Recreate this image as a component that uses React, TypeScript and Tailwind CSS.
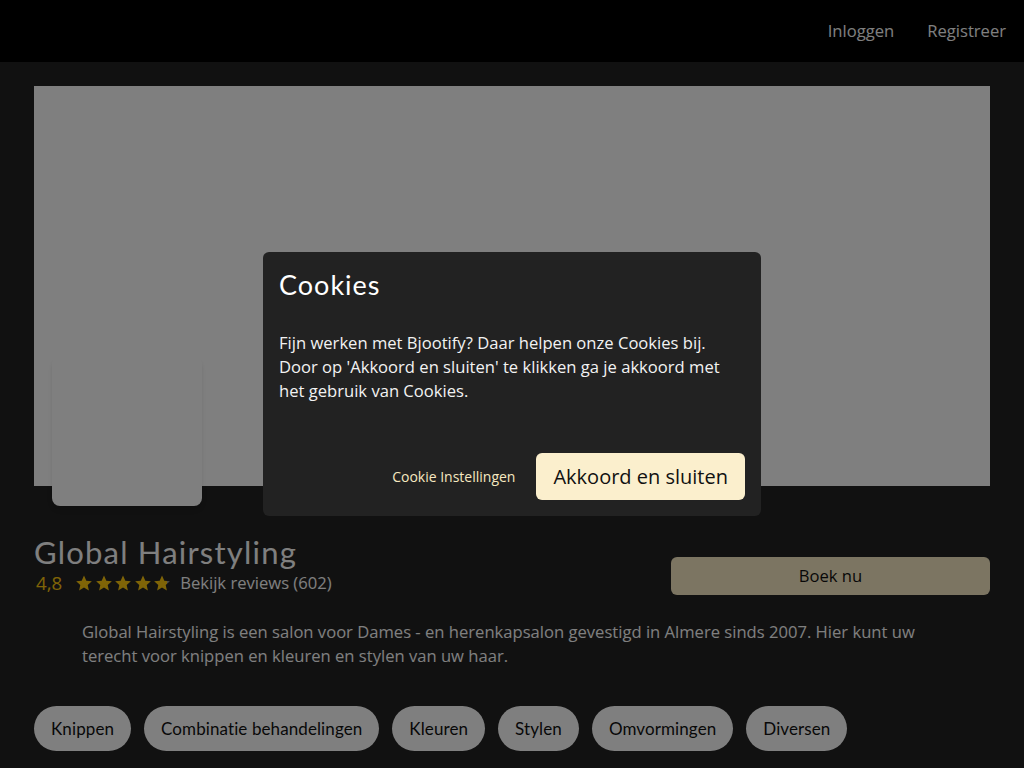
import React from "react";

const CATEGORIES = [
  "Knippen",
  "Combinatie behandelingen",
  "Kleuren",
  "Stylen",
  "Omvormingen",
  "Diversen",
];

function Star({ fill = 1 }: { fill?: number }) {
  const id = `star-${Math.round(fill * 100)}`;
  return (
    <svg viewBox="1 1.2 22 21" className="w-4 h-4">
      <defs>
        <linearGradient id={id}>
          <stop offset={`${fill * 100}%`} stopColor="#ffc90e" />
          <stop offset={`${fill * 100}%`} stopColor="#9a9a9a" />
        </linearGradient>
      </defs>
      <path
        d="M12 1.5l3.2 7 7.6.8-5.7 5.1 1.6 7.5L12 18l-6.7 3.9 1.6-7.5L1.2 9.3l7.6-.8z"
        fill={`url(#${id})`}
      />
    </svg>
  );
}

export default function App() {
  return (
    <div className="relative min-h-screen bg-[#222] font-['Open_Sans',sans-serif] text-[16.6px] overflow-hidden">
      {/* HEADER */}
      <header className="h-[62px] bg-black flex items-center justify-end gap-[33px] pr-[18px] text-white">
        <a href="#">Inloggen</a>
        <a href="#">Registreer</a>
      </header>

      <main className="px-[34px] pt-[24px]">
        {/* HERO IMAGE + AVATAR */}
        <div className="relative h-[400px] bg-white">
          <div className="absolute left-[18px] -bottom-[20px] w-[150px] h-[150px] rounded-lg bg-white shadow-md" />
        </div>

        {/* TITLE + BOOK */}
        <div className="flex justify-between items-end mt-[48px]">
          <div>
            <h1 className="font-['Lato',sans-serif] text-[31px] leading-[36px] tracking-[1.2px] text-white">
              Global Hairstyling
            </h1>
            <div className="flex items-center -mt-[1px]">
              <span className="text-[18.7px] text-[#ffc90e] ml-[2px]">4,8</span>
              <div className="flex gap-[3.5px] ml-[14px]">
                <Star />
                <Star />
                <Star />
                <Star />
                <Star fill={0.8} />
              </div>
              <span className="ml-[10px] text-white">Bekijk reviews (602)</span>
            </div>
          </div>
          <button className="mb-[2px] w-[319px] h-[38px] rounded-md bg-[#f8eac4] text-[#111]">
            Boek nu
          </button>
        </div>

        {/* DESCRIPTION */}
        <p className="px-[48px] mt-[23px] leading-[24px] text-white">
          Global Hairstyling is een salon voor Dames - en herenkapsalon gevestigd in Almere sinds 2007. Hier kunt uw terecht voor knippen en kleuren en stylen van uw haar.
        </p>

        {/* CATEGORIES */}
        <div className="flex gap-[13px] mt-[38px]">
          {CATEGORIES.map((c) => (
            <span
              key={c}
              className="h-[45px] px-[17px] flex items-center rounded-full bg-white text-[#111] font-['Lato',sans-serif] text-[17px] tracking-[0.1px]"
            >
              {c}
            </span>
          ))}
        </div>
      </main>

      {/* OVERLAY */}
      <div className="fixed inset-0 bg-black/50 flex items-center justify-center">
        <div className="w-[498px] h-[264px] bg-[#222] rounded-md p-4 flex flex-col">
          <h2 className="font-['Lato',sans-serif] text-[27px] leading-[34px] tracking-[1px] text-white">
            Cookies
          </h2>
          <p className="mt-[29px] leading-[24px] text-[#f2f2f2]">
            Fijn werken met Bjootify? Daar helpen onze Cookies bij. Door op 'Akkoord en sluiten' te klikken ga je akkoord met het gebruik van Cookies.
          </p>
          <div className="mt-auto flex items-center justify-end gap-[21px]">
            <button className="text-[14px] text-[#f6e8c0]">Cookie Instellingen</button>
            <button className="h-[47px] px-[17px] rounded-md bg-[#fbefcd] text-[#111] text-[20px]">
              Akkoord en sluiten
            </button>
          </div>
        </div>
      </div>
    </div>
  );
}
